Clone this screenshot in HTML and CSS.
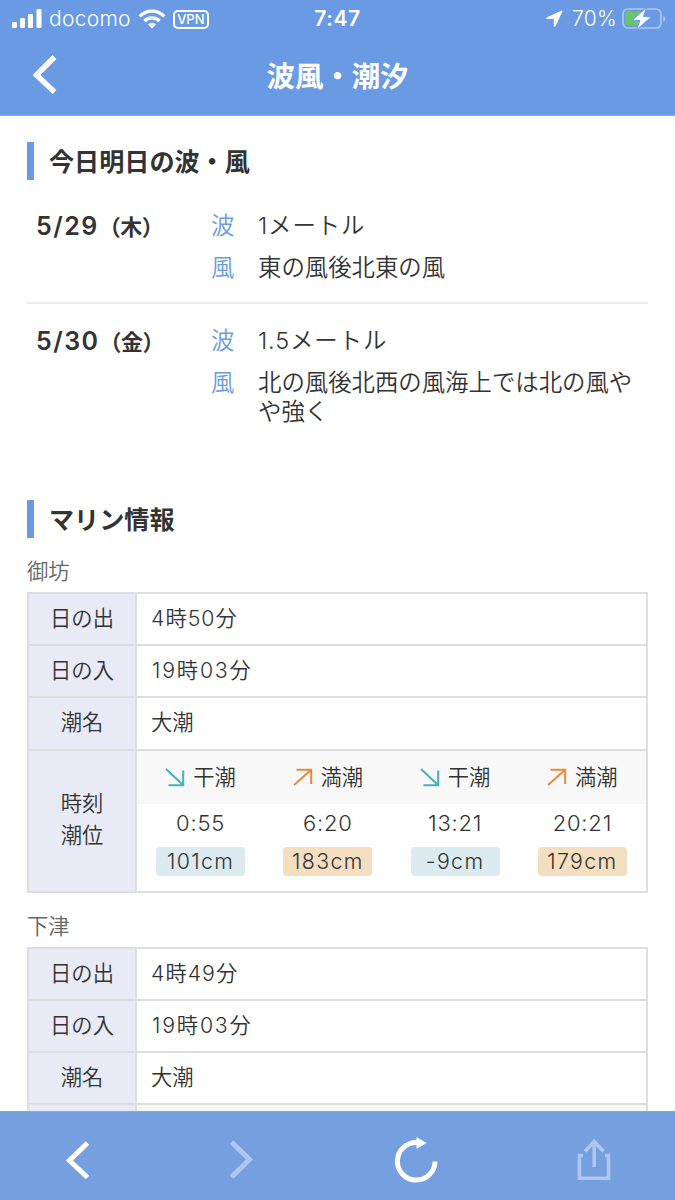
FILE: index.html
```html
<!DOCTYPE html>
<html lang="ja">
<head>
    <meta charset="UTF-8">
    <meta name="viewport" content="width=device-width, initial-scale=1.0">
    <title>波風・潮汐</title>
    <link rel="stylesheet" href="styles.css">
</head>
<body>
    <div class="app">
        <header class="header">
            <div class="status">
                <div class="status-left">
                    <svg class="signal" width="30" height="20" viewBox="0 0 30 20" fill="#fff">
                        <rect x="0" y="13" width="5" height="6" rx="1.2"/>
                        <rect x="8" y="9" width="5" height="10" rx="1.2"/>
                        <rect x="16" y="5" width="5" height="14" rx="1.2"/>
                        <rect x="24.500" y="0" width="5" height="19" rx="1.2"/>
                    </svg>
                    <span class="carrier">docomo</span>
                    <svg class="wifi" width="28" height="20" viewBox="0 0 28 20" fill="none" stroke="#fff" stroke-width="3.3">
                        <path d="M1.700 7.300a17.200 17.200 0 0 1 24.600 0"/>
                        <path d="M6.400 12a10.700 10.700 0 0 1 15.200 0"/>
                        <path d="M14 19.600l-4-4.200a6 6 0 0 1 8 0z" fill="#fff" stroke="none"/>
                    </svg>
                    <span class="vpn">VPN</span>
                </div>
                <span class="clock">7:47</span>
                <div class="status-right">
                    <svg class="location" width="17" height="17" viewBox="0 0 17 17" fill="#fff">
                        <path d="M15.400.7 1 7.200c-1.300.6-1 1.900.3 1.900h6.500v6.300c0 1.500 1.400 1.700 2 .4L16.300 1.700c.4-.8-.1-1.400-.9-1z"/>
                    </svg>
                    <span class="percent">70%</span>
                    <svg class="battery" width="44" height="24" viewBox="0 0 44 24">
                        <rect x="1" y="2" width="38" height="19" rx="5" fill="none" stroke="#fff" stroke-opacity=".45" stroke-width="1.700"/>
                        <path d="M41.300 9v6q2-1 2-3t-2-3z" fill="#fff" fill-opacity=".45"/>
                        <rect x="3.300" y="4.500" width="17" height="14" rx="2.500" fill="#69c665"/>
                        <path d="M24.500.5 10 13.500h8L14.500 23 29.500 9.500h-8z" fill="#fff" stroke="#699ae3" stroke-width="1"/>
                    </svg>
                </div>
            </div>
            <div class="nav">
                <svg class="back" width="24" height="40" viewBox="0 0 24 40" fill="none" stroke="#fff" stroke-width="5.500">
                    <path d="M21.500 2 3.500 20l18 17"/>
                </svg>
                <h1>波風・潮汐</h1>
            </div>
        </header>

        <main>
            <h2>今日明日の波・風</h2>
            <section class="day">
                <div class="date">5/29<span>（木）</span></div>
                <dl>
                    <dt>波</dt><dd>1メートル</dd>
                    <dt>風</dt><dd>東の風後北東の風</dd>
                </dl>
            </section>
            <section class="day">
                <div class="date">5/30<span>（金）</span></div>
                <dl>
                    <dt>波</dt><dd>1.5メートル</dd>
                    <dt>風</dt><dd>北の風後北西の風海上では北の風やや強く</dd>
                </dl>
            </section>

            <h2 class="marine">マリン情報</h2>
            <h3>御坊</h3>
            <div class="info">
                <div class="row"><div class="th">日の出</div><div class="td">4時50分</div></div>
                <div class="row"><div class="th">日の入</div><div class="td">19時03分</div></div>
                <div class="row"><div class="th">潮名</div><div class="td">大潮</div></div>
                <div class="row tide-row">
                    <div class="th">時刻<br>潮位</div>
                    <div class="tides">
                        <div class="tide low">
                            <div class="type"><svg width="20" height="19" viewBox="0 0 20 19"><path d="M1 1l17 16M18.200 2.500V17.200H3.500"/></svg>干潮</div>
                            <div class="time">0:55</div>
                            <div class="level">101cm</div>
                        </div>
                        <div class="tide high">
                            <div class="type"><svg width="20" height="19" viewBox="0 0 20 19"><path d="M1 17L18 2M3.500 1.800H18.200V16"/></svg>満潮</div>
                            <div class="time">6:20</div>
                            <div class="level">183cm</div>
                        </div>
                        <div class="tide low">
                            <div class="type"><svg width="20" height="19" viewBox="0 0 20 19"><path d="M1 1l17 16M18.200 2.500V17.200H3.500"/></svg>干潮</div>
                            <div class="time">13:21</div>
                            <div class="level">-9cm</div>
                        </div>
                        <div class="tide high">
                            <div class="type"><svg width="20" height="19" viewBox="0 0 20 19"><path d="M1 17L18 2M3.500 1.800H18.200V16"/></svg>満潮</div>
                            <div class="time">20:21</div>
                            <div class="level">179cm</div>
                        </div>
                    </div>
                </div>
            </div>

            <h3>下津</h3>
            <div class="info">
                <div class="row"><div class="th">日の出</div><div class="td">4時49分</div></div>
                <div class="row"><div class="th">日の入</div><div class="td">19時03分</div></div>
                <div class="row"><div class="th">潮名</div><div class="td">大潮</div></div>
                <div class="row tide-row">
                    <div class="th"></div>
                    <div class="tides">
                        <div class="tide"><div class="type"></div></div>
                    </div>
                </div>
            </div>
        </main>

        <footer class="toolbar">
            <svg width="26" height="40" viewBox="0 0 26 40" fill="none" stroke="#fff" stroke-width="5">
                <path d="M22.500 3 4.500 20.500l18 17"/>
            </svg>
            <svg class="off" width="26" height="40" viewBox="0 0 26 40" fill="none" stroke="#fff" stroke-width="5">
                <path d="M1.500 2 19.500 19.500l-18 17.500"/>
            </svg>
            <svg width="44" height="46" viewBox="0 0 44 46">
                <path d="M23 5.500A18.800 18.800 0 1 0 41 24.500" fill="none" stroke="#fff" stroke-width="5"/>
                <path d="M22.500 0v12l10-6z" fill="#fff"/>
            </svg>
            <svg class="off" width="34" height="44" viewBox="0 0 34 44" fill="none" stroke="#fff" stroke-width="3.600">
                <path d="M6 17.500H2.500V40.300h29V17.500H28M17.200 4v25M8 13.500 17.200 3.500l9.300 10"/>
            </svg>
        </footer>
    </div>
</body>
</html>
```

FILE: styles.css
```css
* {
    box-sizing: border-box;
}
body {
    margin: 0;
    background: #fff;
    color: #333;
    font-family: Inter, "Noto Sans CJK JP", sans-serif;
    font-weight: 350;
}
h1, h2, h3, dl, dd {
    margin: 0;
}
svg {
    display: block;
    flex: none;
}
.app {
    display: flex;
    flex-direction: column;
    height: 1200px;
    overflow: hidden;
}

/* header */
.header {
    height: 116px;
    flex: none;
    background: #699ae3;
    border-bottom: 1px solid #9aa9c4;
    color: #fff;
}
.status {
    display: grid;
    grid-template-columns: 1fr auto 1fr;
    align-items: center;
    height: 36px;
    padding: 1px 9px 0 12px;
    font-size: 21px;
    line-height: 36px;
}
.status-left, .status-right {
    display: flex;
    align-items: center;
}
.status-right {
    justify-content: flex-end;
}
.carrier {
    margin-left: 7px;
    letter-spacing: 0.3px;
}
.wifi {
    margin-left: 7px;
}
.vpn {
    width: 36px;
    height: 19px;
    margin-left: 7px;
    border: 2px solid #fff;
    border-radius: 5px;
    font-size: 13px;
    font-weight: 500;
    line-height: 15px;
    text-align: center;
}
.clock {
    margin-right: 3px;
    font-size: 21px;
    font-weight: 600;
    letter-spacing: 0.6px;
}
.location {
    margin-top: -2px;
}
.percent {
    margin: 0 5px 0 9px;
    letter-spacing: 0.3px;
}
.nav {
    display: grid;
    grid-template-columns: 60px 1fr 60px;
    align-items: center;
    height: 79px;
    padding: 0 0 2px;
}
.back {
    margin-left: 33px;
}
h1 {
    padding-top: 5px;
    font-size: 28.4px;
    font-weight: 700;
    line-height: 40px;
    text-align: center;
}

/* content */
main {
    flex: 1;
    min-height: 0;
    padding: 26px 27px 0;
    overflow: hidden;
}
h2 {
    height: 38px;
    padding-left: 15px;
    border-left: 7px solid #699ae3;
    font-size: 25.1px;
    font-weight: 700;
    line-height: 41px;
}
.day {
    display: flex;
    height: 115px;
    padding: 23px 0 0 9px;
    font-size: 23.4px;
    line-height: 28.5px;
}
h2 + .day {
    height: 124px;
    padding-top: 32px;
    border-bottom: 2px solid #ececec;
}
.date {
    width: 175px;
    font-size: 25px;
    font-weight: 600;
    letter-spacing: 1.5px;
    white-space: nowrap;
}
.date span {
    margin-left: 11px;
    font-size: 22px;
    font-weight: 700;
    letter-spacing: -0.5px;
    font-feature-settings: "halt";
}
dl {
    flex: 1;
    display: grid;
    grid-template-columns: 47px 1fr;
    row-gap: 13.5px;
    align-content: start;
}
dt {
    color: #699ae3;
}
dt + dd:nth-of-type(1) {
    letter-spacing: 0.9px;
}
.marine {
    margin-top: 81px;
}
h3 {
    margin-top: 17px;
    height: 37px;
    color: #666;
    font-size: 21.3px;
    font-weight: 350;
    line-height: 32px;
}

/* sunrise, sunset and tide table */
.info {
    border: 2px solid #dedede;
}
.row {
    display: flex;
    height: 52.2px;
    border-bottom: 2px solid #dedede;
    font-size: 21.3px;
    line-height: 32px;
}
.th {
    display: flex;
    align-items: center;
    justify-content: center;
    width: 108px;
    padding-bottom: 2px;
    border-right: 2px solid #dedede;
    background: #e8eaf5;
}
.td {
    display: flex;
    align-items: center;
    padding: 0 0 2px 14px;
    letter-spacing: 1px;
}
.row:nth-child(2) .td {
    padding-left: 15px;
    letter-spacing: 1.8px;
}
.row:nth-child(3) .td {
    letter-spacing: 0;
}
.tide-row {
    height: 140px;
    border-bottom: 0;
}
.tide-row .th {
    padding-bottom: 3px;
}
.tides {
    flex: 1;
    display: flex;
}
.tide {
    flex: 1;
    text-align: center;
}
.type {
    display: flex;
    align-items: center;
    justify-content: center;
    gap: 8px;
    height: 53px;
    background: #f8f8f8;
}
.type svg {
    fill: none;
    stroke-width: 2;
}
.low svg {
    stroke: #45afbd;
}
.high svg {
    stroke: #e78a3e;
}
.time {
    height: 43.5px;
    font-size: 22px;
    line-height: 38px;
    letter-spacing: 0.8px;
}
.level {
    width: 89px;
    height: 29px;
    margin: 0 auto;
    border-radius: 4px;
    line-height: 29px;
    letter-spacing: 1.4px;
}
.low .level {
    background: #dcebef;
}
.high .level {
    background: #f4dec0;
}

/* bottom toolbar */
.toolbar {
    display: flex;
    justify-content: space-between;
    align-items: center;
    flex: none;
    height: 89px;
    padding: 7px 64px 0 65px;
    border-top: 1px solid #8fa5cc;
    background: #769fdf;
}
.off {
    opacity: 0.42;
}
```
